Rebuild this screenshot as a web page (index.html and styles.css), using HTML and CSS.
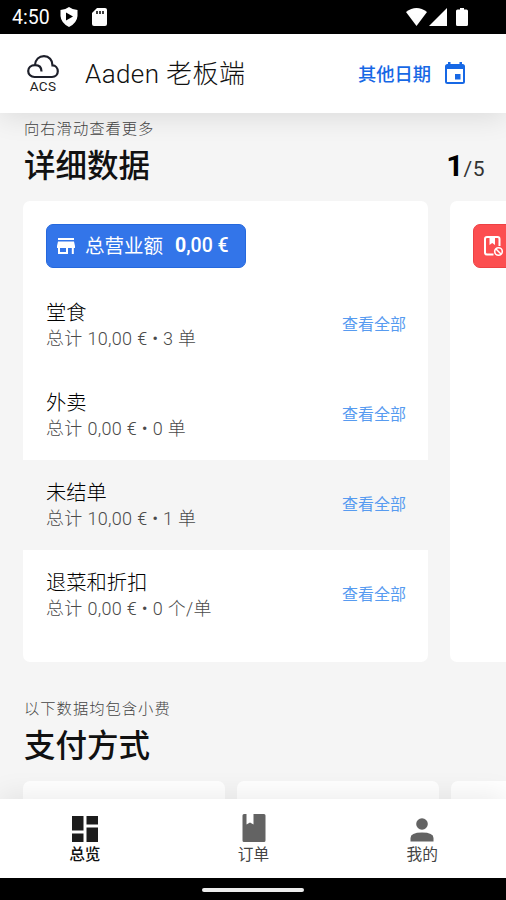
FILE: index.html
```html
<!DOCTYPE html>
<html lang="zh-CN">
<head>
<meta charset="utf-8">
<title>Aaden 老板端</title>
<link rel="stylesheet" href="styles.css">
</head>
<body>
<div class="phone">
  <div class="status">
    <span class="clock">4:50</span>
    <svg class="shield" width="18" height="20" viewBox="0 0 18 20"><path d="M9 0Q5 3 .5 3V9Q1 16 9 20Q17 16 17.500 9V3Q13 3 9 0Z" fill="#fff"/><path d="M6 5.500V13.500L13 9.500Z" fill="#000"/></svg>
    <svg class="sd" width="15" height="18" viewBox="0 0 15 18"><path d="M5 0H13Q15 0 15 2V16Q15 18 13 18H2Q0 18 0 16V5Z" fill="#fff"/><path d="M5 3V6M8 3V6M11 3V6" stroke="#000" stroke-width="1.500"/></svg>
    <svg class="signals" width="62" height="18" viewBox="0 0 62 18"><path d="M0 4Q10.500-4 21 4L10.500 18Z" fill="#fff"/><path d="M41 0V18H23Z" fill="#fff"/><path d="M54 0H58V1.500H60.500Q62 1.500 62 3V16.500Q62 18 60.500 18H51.500Q50 18 50 16.500V3Q50 1.500 51.500 1.500H54Z" fill="#fff"/></svg>
  </div>
  <header class="header">
    <div class="logo">
      <svg width="32" height="24" viewBox="0 0 32 24" fill="none" stroke="#1d1f2a" stroke-width="2.200"><path d="M14.500 16.500C14.500 12.500 12 10.200 8 10.200C4 10.200 1.200 12.700 1.200 16C1.200 19.500 4 22 7.500 22H25C28.500 22 30.800 19.500 30.800 16.300C30.800 13 28.500 10.500 25.500 10.400C25.500 5 22 1.200 17 1.200C12 1.200 8.500 4.500 8 10"/></svg>
      <span class="logo-name">ACS</span>
    </div>
    <h1 class="app-name">Aaden 老板端</h1>
    <a class="date"><span>其他日期</span>
      <svg width="20" height="22" viewBox="0 0 20 22"><path fill="#1768e5" fill-rule="evenodd" d="M3 0H5.500V2H14.500V0H17V2H17.500Q20 2 20 4.500V19.500Q20 22 17.500 22H2.500Q0 22 0 19.500V4.500Q0 2 2.500 2H3ZM2 7V20H18V7ZM10 12H15.500V17.500H10Z"/></svg>
    </a>
  </header>
  <main class="content">
    <section>
      <p class="hint">向右滑动查看更多</p>
      <div class="heading"><h2>详细数据</h2><div class="page"><b>1</b>/5</div></div>
      <div class="cards">
        <article class="card">
          <div class="badge">
            <svg width="18" height="16" viewBox="0 0 18 16"><path fill="#fff" fill-rule="evenodd" d="M1 0H17V2H1ZM1 3.500H17L18 8V10H16.800V16H14.800V10H11V16H1V10H0V8ZM3 10V14H9V10Z"/></svg>
            <span class="badge-name">总营业额</span><span class="amount"><b>0</b>,00 €</span>
          </div>
          <div class="row"><div><h3>堂食</h3><p>总计 10,00 € • 3 单</p></div><a>查看全部</a></div>
          <div class="row"><div><h3>外卖</h3><p>总计 0,00 € • 0 单</p></div><a>查看全部</a></div>
          <div class="row shaded"><div><h3>未结单</h3><p>总计 10,00 € • 1 单</p></div><a>查看全部</a></div>
          <div class="row"><div><h3>退菜和折扣</h3><p>总计 0,00 € • 0 个/单</p></div><a>查看全部</a></div>
        </article>
        <article class="card">
          <div class="badge red">
            <svg width="20" height="21" viewBox="0 0 20 21" fill="none"><path d="M9.500 18.500H3Q1 18.500 1 16.500V3Q1 1 3 1H13.500Q15.500 1 15.500 3V10" stroke="#fff" stroke-width="2"/><path d="M5.500 1V9L8.200 7L11 9V1" fill="#fff"/><circle cx="14.500" cy="15.500" r="3.800" stroke="#fff" stroke-width="1.600"/><path d="M12 13L17 18" stroke="#fff" stroke-width="1.500"/></svg>
          </div>
        </article>
      </div>
    </section>
    <section class="payments">
      <p class="hint">以下数据均包含小费</p>
      <div class="heading"><h2>支付方式</h2></div>
      <div class="tiles"><div></div><div></div><div></div></div>
    </section>
  </main>
  <nav class="nav">
    <a class="active"><svg width="26" height="26" viewBox="0 0 26 26" fill="#1c1c1c"><path d="M0 0H11.500V14.500H0ZM14.500 0H26V8.500H14.500ZM0 17.500H11.500V26H0ZM14.500 11.500H26V26H14.500Z"/></svg><span>总览</span></a>
    <a><svg width="24" height="28" viewBox="0 0 24 28"><path fill="#636363" d="M2 0H4.500V10.500L8 8.500L11.500 10.500V0H22Q23.500 0 23.500 1.500V26.500Q23.500 28 22 28H2Q.5 28 .5 26.500V1.500Q.5 0 2 0Z"/></svg><span>订单</span></a>
    <a><svg width="24" height="24" viewBox="0 0 24 24" fill="#636363"><circle cx="12" cy="6" r="5.800"/><path d="M.5 23.500V20Q.5 14.500 12 14.500T23.500 20V23.500Z"/></svg><span>我的</span></a>
  </nav>
  <div class="gesture"><i></i></div>
</div>
</body>
</html>
```
FILE: styles.css
```css
* { box-sizing: border-box; margin: 0; padding: 0; }
body { background: #f5f5f5; font-family: Roboto, "Noto Sans CJK SC", sans-serif; color: #111; }
.phone { width: 506px; height: 900px; display: flex; flex-direction: column; overflow: hidden; }
svg { display: block; flex: none; }
.status { height: 34px; flex: none; background: #000; display: flex; align-items: center; padding: 0 38px 0 12px; color: #fff; }
.clock { font-size: 19.5px; font-weight: 400; width: 48px; line-height: 34px; padding-top: 2px; }
.sd { margin-left: 14px; }
.signals { margin-left: auto; }
.header { position: relative; z-index: 2; height: 79px; flex: none; background: #fff; display: flex; align-items: center; padding: 0 41px 0 27px; box-shadow: 0 4px 28px rgba(0,0,0,.11); }
.logo { width: 32px; display: flex; flex-direction: column; align-items: center; }
.logo-name { font-size: 13.5px; line-height: 12px; font-weight: 400; margin-top: 1px; color: #222; letter-spacing: .3px; }
.app-name { font-size: 26px; font-weight: 300; line-height: 36px; margin-left: 26px; letter-spacing: .4px; color: #111; }
.date { margin-left: auto; display: flex; align-items: center; gap: 14px; color: #1768e5; font-size: 18.3px; font-weight: 500; }
.date span { margin-top: -1px; }
.date svg { margin-top: -2px; }
.content { flex: 1; min-height: 0; overflow: hidden; padding-left: 23px; }
.hint { font-size: 15.3px; font-weight: 300; letter-spacing: 1px; line-height: 20px; padding: 6px 0 0 1px; color: #444; }
.heading { display: flex; align-items: center; justify-content: space-between; height: 52px; padding: 3px 21px 0 1px; }
h2 { font-size: 31.5px; font-weight: 500; line-height: 44px; }
.page { font-size: 21px; letter-spacing: .5px; color: #333; margin-top: -3px; }
.page b { font-size: 30px; font-weight: 700; letter-spacing: 0; color: #000; }
.cards { display: flex; gap: 22px; margin-top: 10px; }
.card { width: 405px; height: 461px; flex: none; background: #fff; border-radius: 7px; padding-top: 23px; }
.badge { display: flex; align-items: center; width: 200px; height: 44px; margin: 0 0 12px 22.5px; padding-left: 10px; border-radius: 7px; background: #3375e9; border: 1px solid #2568dd; color: #fff; }
.badge.red { background: #fc4e50; border-color: #ed4144; padding-left: 10px; }
.badge span { margin-top: -2px; }
.badge .badge-name { font-size: 19.5px; margin: -4px 0 0 10.5px; }
.amount { font-size: 19.5px; font-weight: 500; margin-left: 12px; }
.row { height: 90px; display: flex; align-items: center; justify-content: space-between; padding: 0 22px 0 23px; }
.row.shaded { background: #f5f5f5; }
h3 { font-size: 20.3px; font-weight: 300; line-height: 26px; color: #000; }
.row p { font-size: 18px; font-weight: 300; line-height: 26px; color: #4a4a4a; letter-spacing: .33px; white-space: nowrap; }
.row div { padding-top: 2px; }
.row a { font-size: 16px; color: #579bf0; margin-top: -5px; }
.payments { margin-top: 31px; }
.tiles { display: flex; gap: 12px; margin-top: 10px; }
.tiles div { width: 202px; height: 90px; flex: none; background: #fff; border-radius: 7px; }
.nav { position: relative; z-index: 2; height: 79px; flex: none; display: flex; background: #fff; box-shadow: 0 -4px 28px rgba(0,0,0,.08); margin-top: -1px; }
.nav a { flex: 1; display: flex; flex-direction: column; align-items: center; justify-content: flex-end; padding: 0 0 13px 1px; font-size: 15.7px; color: #444; }
.nav span { line-height: 20px; margin-top: 3px; }
.nav .active { color: #111; font-weight: 500; }
.gesture { height: 22px; flex: none; background: #000; display: flex; justify-content: center; align-items: center; padding-top: 2px; }
.gesture i { width: 102px; height: 4px; border-radius: 2px; background: #eee; }
```
